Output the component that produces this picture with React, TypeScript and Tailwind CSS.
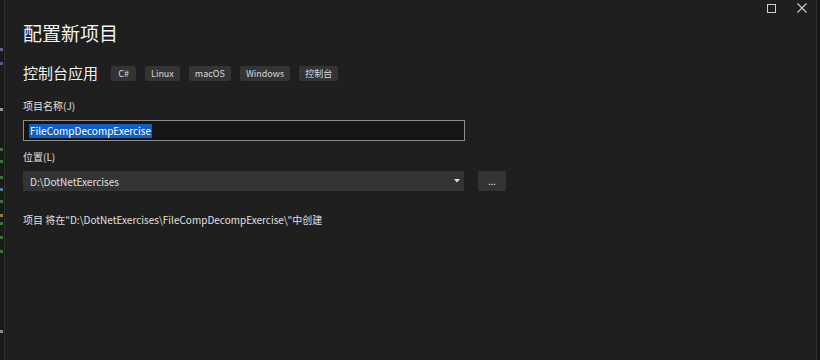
import React from "react";

const tags = ["C#", "Linux", "macOS", "Windows", "控制台"];

function EdgeStrip() {
    // sliver of the code editor visible behind the dialog
    const marks = [
        { top: 48, color: "bg-[#8a7fb0]" },
        { top: 62, color: "bg-[#6b7fc0]" },
        { top: 108, color: "bg-[#cfcfcf]" },
        { top: 148, color: "bg-[#4e9a4e]" },
        { top: 160, color: "bg-[#4e9a4e]" },
        { top: 176, color: "bg-[#4e9a4e]" },
        { top: 188, color: "bg-[#6fa0d0]" },
        { top: 200, color: "bg-[#4e9a4e]" },
        { top: 214, color: "bg-[#d0a050]" },
        { top: 222, color: "bg-[#4e9a4e]" },
        { top: 236, color: "bg-[#4e9a4e]" },
        { top: 250, color: "bg-[#4e9a4e]" },
        { top: 330, color: "bg-[#bbbbbb]" },
    ];
    return (
        <div className="relative w-[5px] shrink-0 bg-[#1a1a1a] border-r border-[#2e2e2e]">
            {marks.map((m, i) => (
                <div
                    key={i}
                    className={`absolute left-0 h-[3px] w-[3px] opacity-70 ${m.color}`}
                    style={{ top: m.top }}
                />
            ))}
        </div>
    );
}

export default function App() {
    return (
        <div
            className="flex h-[360px] w-[820px] overflow-hidden bg-[#1f1f1f] text-[#e6e6e6]"
            style={{ fontFamily: '"Noto Sans CJK SC", "Open Sans", "Noto Sans", sans-serif' }}
        >
            <EdgeStrip />
            <div className="relative flex-1 pl-[18px] pt-[17px]">
                {/* window controls */}
                <div className="absolute right-[9px] top-[3px] flex items-center gap-[21px] text-[#cfcfcf]">
                    <svg width="9" height="9" viewBox="0 0 9 9">
                        <rect x="0.5" y="0.5" width="8" height="8" fill="none" stroke="currentColor" strokeWidth="1" />
                    </svg>
                    <svg width="10" height="10" viewBox="0 0 10 10">
                        <path d="M0.5 0.5 L9.5 9.5 M9.5 0.5 L0.5 9.5" stroke="currentColor" strokeWidth="1.1" />
                    </svg>
                </div>

                <h1 className="text-[19px] leading-[32px] font-normal text-[#f2f2f2]">配置新项目</h1>

                <div className="mt-[12px] flex items-center">
                    <span className="text-[15px] leading-[24px] text-[#f0f0f0]">控制台应用</span>
                    <div className="ml-[13px] flex items-center gap-[9px]">
                        {tags.map((t) => (
                            <span
                                key={t}
                                className="flex h-[15px] min-w-[25px] items-center justify-center rounded-[2px] bg-[#343434] px-[6px] text-[9px] leading-none text-[#d8d8d8]"
                            >
                                {t}
                            </span>
                        ))}
                    </div>
                </div>

                <div className="mt-[14px] text-[10px] leading-[14px] text-[#e0e0e0]">项目名称(J)</div>
                <div className="mt-[7px] flex h-[21px] w-[442px] items-center border border-[#8c8c8c] bg-[#151515] pl-[5px]">
                    <span className="bg-[#0f5fc7] px-[1px] text-[10px] leading-[14px] text-white">
                        FileCompDecompExercise
                    </span>
                </div>

                <div className="mt-[9px] text-[10px] leading-[14px] text-[#e0e0e0]">位置(L)</div>
                <div className="mt-[7px] flex items-center gap-[14px]">
                    <div className="flex h-[20px] w-[441px] items-center justify-between bg-[#333333] pl-[7px] pr-[4px]">
                        <span className="text-[10px] text-[#e0e0e0]">D:\DotNetExercises</span>
                        <svg width="6" height="4" viewBox="0 0 6 4" className="text-[#e0e0e0]">
                            <path d="M0 0 L6 0 L3 3.5 Z" fill="currentColor" />
                        </svg>
                    </div>
                    <div className="flex h-[20px] w-[28px] items-end justify-center bg-[#333333] pb-[5px] text-[9px] leading-none text-[#e0e0e0]">
                        ...
                    </div>
                </div>

                <div className="mt-[22px] text-[10px] leading-[14px] text-[#e0e0e0]">
                    项目 将在"D:\DotNetExercises\FileCompDecompExercise\"中创建
                </div>
            </div>
            <div className="w-[4px] shrink-0 border-l border-[#2e2e2e] bg-[#181818]" />
        </div>
    );
}
